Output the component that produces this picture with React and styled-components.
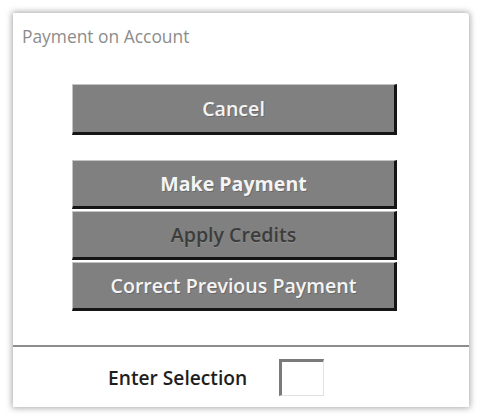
import styled, { createGlobalStyle } from "styled-components";

const GlobalStyle = createGlobalStyle`
  html, body {
    margin: 0;
    padding: 0;
    background: #ffffff;
    font-family: "Open Sans", "Noto Sans", sans-serif;
  }
`;

function App() {
  return (
    <>
      <GlobalStyle />
      <Panel>
        <MenuArea>
          <Title>Payment on Account</Title>
          <Buttons>
            <MenuButton $tall>Cancel</MenuButton>
            <ButtonGroup>
              <MenuButton $strong>Make Payment</MenuButton>
              <MenuButton $disabled>Apply Credits</MenuButton>
              <MenuButton>Correct Previous Payment</MenuButton>
            </ButtonGroup>
          </Buttons>
        </MenuArea>
        <Footer>
          <Label>Enter Selection</Label>
          <SelectionInput type="text" />
        </Footer>
      </Panel>
    </>
  );
}

const Panel = styled.div`
  margin: 13px;
  width: 456px;
  height: 394px;
  background: #ffffff;
  box-shadow: 0 0 6px 1px rgba(0, 0, 0, 0.35);
  border-top-right-radius: 3px;
  display: flex;
  flex-direction: column;
  box-sizing: border-box;
`;

const MenuArea = styled.div`
  height: 334px;
  border-bottom: 2px solid #8c8c8c;
  box-sizing: border-box;
  display: flex;
  flex-direction: column;
`;

const Title = styled.div`
  margin: 12px 0 0 9px;
  font-size: 17.4px;
  line-height: 22px;
  color: #8c8c8c;
`;

const Buttons = styled.div`
  margin: 37px 0 0 59px;
  width: 325px;
  display: flex;
  flex-direction: column;
  gap: 25px;
`;

const ButtonGroup = styled.div`
  display: flex;
  flex-direction: column;
  gap: 2px;
`;

const MenuButton = styled.button`
  height: ${(p) => (p.$tall ? "51px" : "49px")};
  width: 100%;
  box-sizing: border-box;
  background: #808080;
  border-style: solid;
  border-width: 1px 3px 3px 1px;
  border-color: #c4c4c4 #151515 #151515 #c4c4c4;
  font-family: "Open Sans", "Noto Sans", sans-serif;
  font-size: 19.6px;
  font-weight: ${(p) => (p.$strong ? 700 : 600)};
  color: ${(p) => (p.$disabled ? "#3c3c3c" : "#f4f4f4")};
  text-shadow: ${(p) =>
    p.$disabled ? "0 1px 0 rgba(255,255,255,0.15)" : "1px 1px 0 rgba(0,0,0,0.2)"};
  padding: 0;
  cursor: pointer;
`;

const Footer = styled.div`
  flex: 1;
  display: flex;
  align-items: center;
  padding-left: 95px;
  gap: 32px;
`;

const Label = styled.span`
  font-size: 19.2px;
  font-weight: 600;
  color: #1e1e1e;
`;

const SelectionInput = styled.input`
  width: 45px;
  height: 37px;
  box-sizing: border-box;
  border-style: solid;
  border-width: 3px 1px 1px 3px;
  border-color: #7a7a7a #e2e2e2 #e2e2e2 #7a7a7a;
  background: #ffffff;
  outline: none;
  margin-top: 1px;
`;

export default App;
